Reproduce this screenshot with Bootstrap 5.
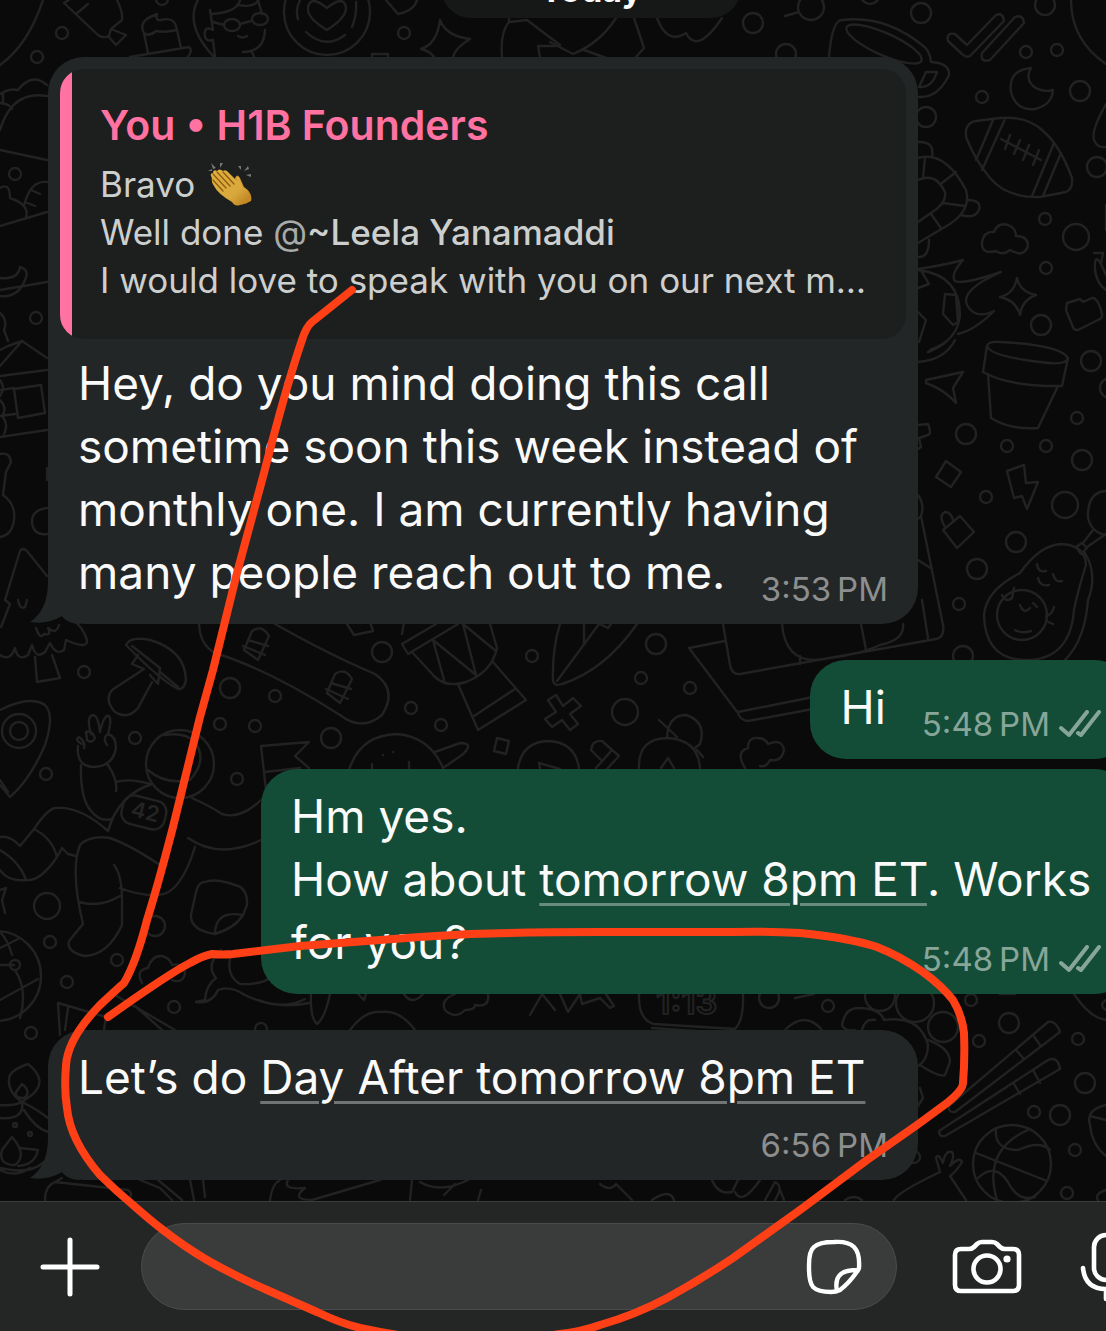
<!DOCTYPE html>
<html lang="en">
<head>
<meta charset="utf-8">
<meta name="viewport" content="width=device-width, initial-scale=1">
<title>Chat</title>
<link href="https://cdn.jsdelivr.net/npm/bootstrap@5.3.0/dist/css/bootstrap.min.css" rel="stylesheet">
<style>
body{background:#0a0a0a;color:#fafafa;font-family:Inter,"Liberation Sans",sans-serif;font-size:46px;line-height:63px}
.app{height:100vh}
.thread{padding:0 0 21px 48px;min-height:0}
.wall{stroke:#222;stroke-width:2.4;fill:none;stroke-linecap:round;stroke-linejoin:round}
.wall text{font-family:Inter,sans-serif;font-weight:600}
.day{background:#151817;border-radius:30px;width:300px;height:66px;font-size:34px;line-height:76px;margin:0 0 39px 393px}
.bubble{width:100%;max-width:870px;border-radius:36px;padding:16px 30px 15px}
.theirs{background:#232627}
.mine{background:#144d37;margin-right:-25px}
.with-quote{padding-top:12px}
.quoted{background:#1d1f1e;border-radius:24px;margin:0 -18px 13px;height:270px;color:#cdcfce;font-size:35px;line-height:48px}
.quoted-bar{width:12px;background:#ff72a1}
.quoted-body{padding:32px 28px 0;min-width:0}
.quoted-name{color:#ff72a1;font-size:41px;line-height:48px;font-weight:600;margin-bottom:11px}
.clap{margin-left:13px}
.at{color:#a9abaa}
.stamp{font-size:33px;line-height:40px;color:#8d8f8f;margin-top:16px}
.tuck{margin-top:-35px}
.mine .stamp{color:#87a699}
.brief{width:auto;min-height:99px}
.brief .stamp{margin:28px 0 0 36px}
.mine + .mine{margin-top:10px}
.turn{margin-top:36px}
.when{color:inherit;text-decoration:underline;text-decoration-thickness:3px;text-underline-offset:7px;text-decoration-color:rgba(255,255,255,.36)}
.when:hover{color:inherit}
.tail{left:-18px;bottom:0}
.ticks{margin-left:9px}
.composer{background:#242626;border-top:1px solid #3c3e3e;height:130px;padding-left:40px}
.field-shell{background:#3a3b3b;border:1px solid #4a4b4b;border-radius:44px;height:87px;margin:0 55px 0 41px;padding:0 34px;max-width:756px}
.field-shell input{min-width:0;color:#fff;box-shadow:none;outline:0}
.tool{background:none;border:0;padding:0;line-height:0;flex:none}
.mic{margin:0 -26px 0 58px}
.ink{fill:none;stroke:#ff4016;stroke-width:8;stroke-linecap:round;stroke-linejoin:round}
</style>
<script src="https://cdn.jsdelivr.net/npm/bootstrap@5.3.0/dist/js/bootstrap.bundle.min.js"></script>
</head>
<body>
<div class="app d-flex flex-column position-relative overflow-hidden">

<svg class="wall position-absolute top-0 start-0 w-100 h-100" aria-hidden="true">
  <!-- top strip -->
  <path d="M43 0Q28 45 0 65M64 3L73-3M64 3L98 35Q104 39 109 36L111 29L122 20Q123 12 117 0M76 14L88 4M111 29L126 35L116 45L108 36"/>
  <path d="M148 53L144 33Q137 21 157 14Q155 21 161 20Q175 16 177 30L181 48M144 33Q149 37 156 31Q164 33 177 30M130 57L189 47Q193 50 188 57"/>
  <path d="M198 0Q184 25 214 57M210 10L213 30M212 14Q238 12 240 0M237 5Q255 8 258 0L262 14M265 30Q264 52 243 52M252 52L254 57M213 30Q203 25 205 37Q207 42 213 40L215 57M238 36Q242 39 247 36M240 24L251 21M213 22L224 25"/>
  <ellipse cx="232" cy="25" rx="8" ry="6"/><ellipse cx="260" cy="19" rx="8" ry="6"/>
  <circle cx="327" cy="12" r="43"/><path d="M327 30Q307 18 308 8Q310-6 327 8Q344-6 346 8Q346 18 327 30ZM298 19Q295 10 300 0M352 27Q357 15 356 2M306 32Q325 50 345 35"/>
  <path d="M440 20Q446 36 470 39Q455 48 453 57M440 20Q437 44 421 49Q430 51 434 57M502 57Q500 32 509 22L527 20L560 45M509 22V18M540 57L538 46H556M372 57V54H388V57M386 0L398 14Q414 11 417 0"/>
  <path d="M616 18Q600 43 573 54L550 42M584 50L612 60M634 18L644 48L636 57M657 18Q667 45 686 33Q697 55 722 18M785 16L799 12"/>
  <path d="M829 57Q832 20 842 20Q885 15 922 45Q930 50 931 62Q950 63 949 75Q938 98 919 97M919 87L926 72H937Q932 88 919 87"/>
  <ellipse cx="884" cy="44" rx="41" ry="11" transform="rotate(24 884 44)"/>
  <path d="M955 34L967 45L996 15Q1003 12 1004 21L970 56Q966 58 962 54L948 41Q946 32 955 34ZM982 53L1015 17Q1023 14 1024 23L990 60Q980 63 982 53Z"/>
  <path d="M1071 0Q1071 40 1106 64M1031 68Q1008 70 1011 92Q1016 111 1035 109Q1052 105 1053 90Q1042 93 1033 86Q1025 78 1031 68Z"/>
  <!-- left edge, upper -->
  <path d="M0 94Q10 88 18 90Q32 72 47 85M0 130Q12 90 47 96M3 103V94M0 103Q10 104 12 109M0 150L47 160M0 226L47 212M0 188Q10 182 10 198Q30 205 26 217M24 206Q30 180 47 182M31 190L40 194M25 202L35 206M0 278Q18 280 20 267Q30 270 25 280Q18 298 0 296M0 290L47 282M0 313Q8 320 4 330L8 341M0 350L8 346L22 341L47 358M0 366L22 341M0 376L47 370M0 390L14 388M0 416L15 414M0 437L47 430M14 389L41 385L45 413L18 418ZM0 380Q6 388 0 396M0 400Q8 408 2 416Q9 424 4 434M0 454Q10 452 11 462L6 472L3 495Q16 504 14 520Q12 535 0 537M47 508Q31 510 32 523Q34 536 47 534M47 468V480"/>
  <path d="M47 576L27 551Q23 547 20 551L5 600L10 604L1 627M18 600Q20 610 25 607L27 600M0 655Q10 662 15 648Q18 662 28 655L32 645Q36 660 45 652L50 643Q56 656 64 650L66 640Q88 650 87 640Q82 625 72 620M35 657L37 682L60 678L52 655M36 628Q40 640 44 634Q52 636 48 628Q56 635 59 625"/>
  <!-- right edge -->
  <path d="M966 130Q968 122 976 121L1000 118Q1027 116 1042 130Q1060 145 1072 178Q1073 189 1066 192L1040 197Q1007 198 990 178Q975 160 966 137ZM993 120L976 160M1005 119L982 170M1054 143L1032 196M1061 153L1043 196M1001 139L1041 160M1010 135L1005 149M1020 140L1014 154M1029 145L1023 160M1039 150L1033 165"/>
  <path d="M918 142Q935 141 932 157M918 158Q945 150 966 190Q972 212 945 227L918 243M918 180Q936 172 945 192Q947 203 931 213L918 222M925 157L923 178M956 172L942 183M943 203L965 206M931 214L941 228M967 200Q982 200 979 210Q975 219 961 215M929 240Q929 258 918 257"/>
  <path d="M994 232Q998 222 1008 225Q1016 228 1016 236Q1028 236 1028 246Q1024 258 1010 250Q1003 256 996 251Q981 255 982 242Q984 231 994 232Z"/>
  <path d="M918 269Q945 265 963 260Q950 275 955 281Q962 285 1001 272Q960 290 967 305Q975 320 994 311Q975 330 958 334M918 270Q960 275 960 315Q958 340 930 350M922 272L929 284L918 288M945 294L956 295L958 322L953 325L943 314ZM918 312L926 320L919 342M918 362Q945 360 955 340M928 352Q940 348 948 340"/>
  <path d="M1017 278Q1020 292 1036 295Q1022 300 1020 315Q1016 300 1000 297Q1014 294 1017 278ZM1066 310L1067 303L1080 299L1083 302L1092 298Q1098 297 1102 314Q1103 318 1098 320L1078 330Q1074 331 1072 325ZM1106 104Q1089 134 1095 142Q1098 148 1106 147M1106 205V230M1094 253H1103L1101 264Q1094 252 1095 270Q1097 284 1106 290M1101 264L1106 275"/>
  <path d="M987 346Q988 341 1000 342Q1060 345 1068 358Q1066 366 1040 362Q990 356 987 346ZM987 346L983 372Q1010 387 1062 386L1068 358M988 374L991 418Q1010 430 1038 428L1058 386M926 380L963 372L953 388L956 403Q945 390 926 383ZM946 461L961 472L951 487L936 477ZM1007 471L1024 465L1026 483L1038 482L1027 509L1022 496L1014 498ZM943 530L960 516L974 532L957 548ZM945 527Q938 515 945 512Q951 512 953 520M918 425L928 424Q932 434 928 435L919 438L921 447L918 449"/>
  <path d="M1061 544Q1085 545 1086 565Q1078 590 1074 610Q1070 660 1026 660Q985 660 984 615Q986 590 1020 573Q1040 545 1061 544ZM1085 553Q1098 575 1088 600Q1085 640 1065 660M1076 547L1082 543L1087 548L1081 554ZM1083 543L1093 530M1087 547L1106 534M1106 491Q1087 492 1088 518Q1092 533 1106 535M1037 564Q1038 573 1046 571M1038 578Q1040 587 1049 585M1053 574Q1055 583 1062 581M1002 595Q1006 603 1012 598L1014 588M1020 605Q1024 615 1030 608M1033 603L1037 607M1015 630Q1022 634 1031 631M1046 616Q1052 615 1054 607M1046 621L1053 624"/>
  <circle cx="1022" cy="615" r="25"/>
  <path d="M918 495Q925 505 921 516L943 625Q945 637 936 639L740 674Q732 675 730 665L723 624M918 560L932 569M918 519L921 516M861 624L866 650M922 600L928 638M782 624Q785 660 815 660Q860 655 880 645Q905 640 903 624M800 656V664M689 648L725 641M689 648L738 713Q740 720 748 721L813 709M738 712L813 697"/>
  <!-- band between bubbles -->
  <path d="M404 622L402 634M402 644L408 654L458 624M402 644L436 624M412 652L435 677Q447 688 466 682Q492 672 497 648L490 624M433 640L444 680M433 640L476 675L463 624L496 651M458 684L478 730L526 700L493 662M474 716L515 689"/>
  <path d="M560 624Q552 650 553 680Q554 687 562 684Q605 670 637 624M557 681L599 624M584 624V643M600 624L608 628L611 624M347 624L354 635L373 631L370 622"/>
  <path d="M556 695L563 706L573 698L581 706L570 714L578 724L570 730L562 720L552 727L545 719L556 712L548 700ZM497 738L509 741L506 754L494 751ZM518 768Q522 742 548 741Q575 742 579 768M540 768L539 763L560 769M591 750Q592 740 602 741L619 756L606 770M612 750L596 768M591 750L601 760M639 768Q638 738 668 738Q698 740 700 768M667 738Q668 715 686 715Q707 722 700 744L695 748M659 720L677 737M697 750L703 757M661 768L668 758L674 768"/>
  <path d="M745 768Q735 752 748 748Q748 737 758 738Q765 738 768 744Q782 738 784 750Q782 762 770 760Q766 768 760 766"/>
  <path d="M199 624Q200 645 215 653Q270 670 340 715Q362 732 382 715Q398 690 375 674Q330 655 275 624M244 650L252 631Q262 624 269 636L258 660ZM243 646L265 655M248 640L268 646M327 693L335 674Q345 667 352 679L340 703ZM326 689L348 699M331 683L351 689"/>
  <path d="M126 645Q130 636 150 640Q185 650 186 680Q184 690 178 689Q160 680 126 645ZM138 655L132 664L144 669L112 690Q104 700 115 712Q128 720 138 708L152 682M132 646L160 668L158 684L150 675M160 672L178 687"/>
  <path d="M0 710Q30 695 45 705Q55 715 45 745Q30 780 10 797L0 785M0 780L8 792"/><circle cx="19" cy="731" r="17"/><circle cx="19" cy="731" r="9"/>
  <!-- astronaut -->
  <circle cx="180" cy="764" r="34"/><path d="M148 770Q165 785 190 780Q208 760 195 742Q185 732 165 735M82 744Q74 740 79 737Q86 742 84 748M78 746Q76 765 92 767Q113 767 116 748Q116 736 108 734Q102 738 107 745M91 734Q86 716 93 715Q98 715 100 732Q104 714 109 716Q112 720 108 734M86 732Q92 730 95 738Q92 744 87 740ZM81 765Q80 800 92 812Q100 822 112 819M108 765Q118 780 116 791M116 782Q130 778 150 784M108 831Q118 795 152 784M34 829Q48 808 56 808Q80 806 108 831L112 820M34 829Q52 838 57 857L62 848L68 854L76 856M0 837Q10 835 20 846L34 829M0 850Q20 862 26 880Q40 882 57 857M0 870Q8 882 26 880M192 798Q210 806 222 814Q240 820 261 800M188 838Q220 860 261 840M82 990M83 924Q70 870 80 845Q90 835 110 838Q130 845 160 865M114 865Q122 875 122 900V925Q108 955 85 956Q66 952 69 941L83 924M79 902Q100 908 120 896M120 888Q140 896 158 895Q180 895 195 847"/>
  <rect x="122" y="798" width="44" height="29" rx="11" transform="rotate(14 144 812)"/><text x="131" y="819" font-size="22" transform="rotate(14 144 812)" stroke="none" fill="#242424">42</text>
  <path d="M261 746L309 742L295 756L309 768M261 746L266 790M265 772L300 768M349 770Q360 735 397 734Q430 737 443 768M372 764V772M409 762V770M435 752L460 743Q475 743 462 755L443 768M383 755V755M393 752V752M205 882Q215 878 235 885Q248 888 247 905L243 915Q235 928 215 934Q190 930 191 915L196 892Q198 882 205 882ZM215 934Q215 910 243 915M0 890L6 888L2 900L5 913"/>
  <circle cx="-4" cy="976" r="45"/><path d="M0 948L20 938M0 965L14 965M0 1000L38 979M15 970Q28 990 20 1018M12 955Q8 940 0 932"/><circle cx="15" cy="965" r="5"/>
  <path d="M142 983Q135 970 148 968Q152 955 162 956Q170 958 172 965Q184 962 185 974Q182 984 172 980M221 950Q205 965 216 978Q206 985 205 1000L196 1002Q212 1004 218 990Q230 985 245 995Q275 1010 309 1003M231 955Q225 975 240 984Q260 985 270 978M258 1000Q285 1010 305 999M311 994Q310 1018 317 1024Q325 1018 330 994M60 1035L58 1003L106 1017L104 1030M65 1030L68 1008M115 995L175 1030M135 1006L162 1030M350 1030Q365 1010 382 1012Q400 1010 415 1030M445 1010Q440 1000 455 994M445 1010Q455 1020 465 1010Q475 1010 475 1005Q490 1008 488 994M358 994L364 1000L366 994M404 994Q412 1006 423 994M530 1015L542 994L555 1010M560 994L568 1012L580 994L582 1004L600 998L610 1008L614 1006L606 994"/>
  <path d="M639 994Q638 1020 654 1024L735 1029Q744 1020 743 994M652 1028L740 1034M785 1030Q805 1010 822 1030M795 998L814 994"/><text x="656" y="1014" font-size="34" stroke-width="2">1:13</text>
  <!-- lower right -->
  <circle cx="880" cy="996" r="15"/><circle cx="915" cy="1003" r="19"/><circle cx="943" cy="1027" r="15"/>
  <path d="M842 1025Q845 1008 858 1008Q880 1008 884 1020Q920 1015 928 1045Q928 1060 918 1066M862 1030Q865 1018 875 1020M842 1025Q845 1032 855 1030M928 1040Q950 1048 950 1062L945 1075Q940 1078 920 1065M920 1088L923 1098L918 1106M1000 994L1015 994M1074 994Q1090 1018 1106 1020M1106 1000Q1098 1005 1106 1010"/>
  <path d="M949 1106L1048 1022Q1056 1020 1060 1032L955 1112Q948 1113 949 1106ZM1033 1035L1040 1045M1016 1050L1024 1059M939 1131L1048 1060Q1058 1056 1060 1069L945 1136Q939 1137 939 1131ZM1033 1070L1040 1083M1014 1084L1020 1094"/>
  <circle cx="1012" cy="1164" r="39"/><path d="M996 1129Q994 1150 1018 1150Q1040 1140 1050 1150M1028 1130Q982 1150 997 1200M976 1153L1047 1181M978 1178Q995 1162 1008 1182Q1018 1202 1035 1197M894 1200Q898 1192 940 1172L936 1158Q938 1152 943 1163Q945 1150 952 1152Q955 1156 950 1166Q960 1156 962 1162Q956 1172 950 1176L966 1200M1106 1105Q1085 1110 1090 1125Q1092 1145 1106 1156M1090 1116L1106 1120M1098 1200Q1094 1194 1106 1190"/>
  <!-- lower left -->
  <path d="M28 1064Q48 1080 33 1094L22 1102Q5 1090 10 1075Q15 1068 28 1064ZM22 1084Q32 1092 24 1098Q14 1098 16 1092ZM0 1105Q15 1106 22 1102Q25 1120 0 1118M24 1110Q35 1128 48 1132M22 1102Q35 1108 48 1118M12 1137Q28 1155 15 1165Q-2 1165 2 1150ZM0 1168Q30 1175 44 1162M20 1148L38 1150Q35 1165 18 1166M0 1170Q15 1178 30 1168M45 1200Q45 1186 55 1182L128 1190Q134 1194 128 1200M55 1182L62 1178M140 1180L160 1188L172 1200M158 1180L182 1200M190 1180L194 1200M203 1180L205 1197M270 1200Q272 1184 280 1180M288 1180Q282 1190 305 1188Q290 1200 312 1200L380 1180M410 1200L412 1180M420 1182Q440 1194 468 1180M444 1195L455 1184M478 1200L481 1190M600 1184Q610 1192 616 1184L632 1200M652 1200Q670 1188 674 1200M712 1180Q718 1195 732 1192L738 1180M735 1192Q742 1206 760 1180M765 1200L775 1182Q784 1186 775 1200M780 1190L784 1200M845 1200Q854 1194 862 1200"/>
  <!-- loose rings -->
  <g>
    <circle cx="62" cy="33" r="6"/><circle cx="37" cy="57" r="6"/><circle cx="162" cy="-1" r="6"/><circle cx="404" cy="33" r="6"/><circle cx="15" cy="174" r="6"/><circle cx="36" cy="318" r="6"/>
    <circle cx="753" cy="23" r="10"/><circle cx="811" cy="7" r="13"/><circle cx="786" cy="54" r="10"/><circle cx="870" cy="-5" r="9"/><circle cx="921" cy="13" r="10"/><circle cx="1045" cy="5" r="10"/><circle cx="1026" cy="52" r="6"/><circle cx="1057" cy="50" r="6"/><circle cx="1080" cy="91" r="10"/><circle cx="982" cy="97" r="6"/><circle cx="926" cy="117" r="10"/><circle cx="1097" cy="167" r="10"/><circle cx="1045" cy="219" r="6"/><circle cx="1076" cy="237" r="13"/><circle cx="1046" cy="268" r="6"/><circle cx="1041" cy="325" r="10"/>
    <circle cx="1091" cy="361" r="10"/><circle cx="1110" cy="388" r="10"/><circle cx="1077" cy="418" r="6"/><circle cx="966" cy="434" r="10"/><circle cx="1007" cy="446" r="6"/><circle cx="1046" cy="446" r="6"/><circle cx="1082" cy="460" r="10"/><circle cx="986" cy="497" r="6"/><circle cx="1065" cy="505" r="13"/><circle cx="1016" cy="542" r="10"/><circle cx="977" cy="569" r="10"/><circle cx="959" cy="604" r="6"/><circle cx="963" cy="656" r="10"/>
    <circle cx="532" cy="656" r="6"/><circle cx="656" cy="644" r="10"/><circle cx="641" cy="678" r="6"/><circle cx="690" cy="688" r="6"/><circle cx="625" cy="712" r="13"/><circle cx="411" cy="708" r="6"/><circle cx="441" cy="725" r="6"/><circle cx="382" cy="652" r="10"/>
    <circle cx="84" cy="672" r="6"/><circle cx="230" cy="688" r="10"/><circle cx="275" cy="696" r="6"/><circle cx="220" cy="724" r="6"/><circle cx="255" cy="726" r="6"/><circle cx="135" cy="738" r="6"/><circle cx="46" cy="774" r="6"/><circle cx="237" cy="779" r="6"/><circle cx="331" cy="738" r="10"/>
    <circle cx="47" cy="906" r="13"/><circle cx="155" cy="926" r="10"/><circle cx="50" cy="942" r="6"/><circle cx="117" cy="960" r="6"/><circle cx="67" cy="982" r="6"/><circle cx="174" cy="1007" r="6"/><circle cx="31" cy="1033" r="6"/><circle cx="261" cy="1029" r="6"/>
    <circle cx="769" cy="998" r="10"/><circle cx="828" cy="1006" r="6"/><circle cx="971" cy="1000" r="6"/><circle cx="1009" cy="1023" r="10"/><circle cx="979" cy="1041" r="6"/><circle cx="1078" cy="1039" r="6"/><circle cx="1085" cy="1083" r="10"/><circle cx="1034" cy="1112" r="6"/><circle cx="1060" cy="1115" r="10"/><circle cx="1075" cy="1150" r="6"/><circle cx="1067" cy="1193" r="6"/><circle cx="914" cy="1157" r="6"/><circle cx="15" cy="1125" r="2"/><circle cx="30" cy="1134" r="2"/>
  </g>
</svg>

<main class="thread flex-grow-1 d-flex flex-column justify-content-end position-relative">
  <div class="day flex-shrink-0 text-center fw-bold">Today</div>

  <article class="bubble theirs with-quote position-relative flex-shrink-0">
    <svg class="tail position-absolute" width="50" height="42" aria-hidden="true"><path d="M18 0Q18 28 0 40Q17 43 32 34Q38 42 50 42V0Z" fill="#232627"/></svg>
    <div class="quoted d-flex overflow-hidden position-relative">
      <div class="quoted-bar flex-shrink-0"></div>
      <div class="quoted-body flex-grow-1">
        <div class="quoted-name text-truncate">You • H1B Founders</div>
        <div class="d-flex align-items-center">Bravo
          <svg class="clap" width="44" height="44" viewBox="0 0 44 44" role="img" aria-label="clapping hands">
            <defs><linearGradient id="skin" x1="0" y1="0" x2="1" y2="1"><stop offset="0" stop-color="#e0b03c"/><stop offset=".65" stop-color="#d8a83c"/><stop offset="1" stop-color="#b87819"/></linearGradient></defs>
            <path d="M27 16Q29 11 32 16L36 25Q45 31 43 39L37 42L24 31Z" fill="#c58a22"/>
            <path d="M4 16Q1 11 5 11Q5 7 9 9Q11 6 15 9Q18 7 21 11L29 19Q27 13 31 15L35 25Q43 29 41 36Q38 43 32 43Q27 45 24 40Q10 32 6 24Q3 20 4 16Z" fill="url(#skin)"/>
            <path d="M5 12L18 26M9 10L22 24M15 10L26 22M5 18L15 29" fill="none" stroke="#8d5b13" stroke-width="1.3" stroke-linecap="round"/>
            <path d="M0 9L4 7L4 9ZM3 1L8 6L5 7ZM12 1L15 1L12 6ZM30 4L33 4L33 8ZM40 4L41 7L36 9ZM38 13L43 12L43 15Z" fill="#777"/>
          </svg>
        </div>
        <div class="text-truncate">Well done <span class="at">@</span><span class="fw-medium">~Leela Yanamaddi</span></div>
        <div class="text-truncate">I would love to speak with you on our next m…</div>
      </div>
    </div>
    <p class="mb-0">Hey, do you mind doing this call sometime soon this week instead of monthly one. I am currently having many people reach out to me.</p>
    <div class="stamp tuck text-end">3:53&#8239;PM</div>
  </article>

  <article class="bubble mine brief turn align-self-end d-flex flex-shrink-0">
    <p class="mb-0">Hi</p>
    <div class="stamp d-flex align-items-center">5:48&#8239;PM<svg class="ticks" width="42" height="28" viewBox="0 0 42 28" fill="none" stroke="#87a699" stroke-width="4" stroke-linecap="round" stroke-linejoin="round" aria-hidden="true"><path d="M2 18L10 25L28 2M19 23L22 25L40 2"/></svg></div>
  </article>

  <article class="bubble mine align-self-end flex-shrink-0">
    <p class="mb-0">Hm yes.<br>How about <a class="when" href="#">tomorrow 8pm ET</a>. Works for you?</p>
    <div class="stamp tuck d-flex align-items-center justify-content-end">5:48&#8239;PM<svg class="ticks" width="42" height="28" viewBox="0 0 42 28" fill="none" stroke="#87a699" stroke-width="4" stroke-linecap="round" stroke-linejoin="round" aria-hidden="true"><path d="M2 18L10 25L28 2M19 23L22 25L40 2"/></svg></div>
  </article>

  <article class="bubble theirs turn position-relative flex-shrink-0">
    <svg class="tail position-absolute" width="50" height="42" aria-hidden="true"><path d="M18 0Q18 28 0 40Q17 43 32 34Q38 42 50 42V0Z" fill="#232627"/></svg>
    <p class="mb-0">Let’s do <a class="when" href="#">Day After tomorrow 8pm ET</a></p>
    <div class="stamp text-end">6:56&#8239;PM</div>
  </article>
</main>

<form class="composer d-flex align-items-center flex-shrink-0 position-relative">
  <button class="tool" type="button" aria-label="Attach"><svg width="60" height="60" fill="none" stroke="#fff" stroke-width="5" stroke-linecap="round"><path d="M30 3V57M3 30H57"/></svg></button>
  <div class="field-shell d-flex align-items-center flex-grow-1">
    <input class="flex-grow-1 border-0 bg-transparent h-100" type="text" aria-label="Message">
    <button class="tool" type="button" aria-label="Stickers"><svg width="56" height="56" fill="none" stroke="#fff" stroke-width="4.4" stroke-linejoin="round"><path d="M28 3Q42 2 48 8Q54 14 53 29Q52 32 50 34Q43 44 34 51Q30 53 25 53Q12 53 7 48Q3 43 3 29V26Q3 12 8 8Q13 3 28 3ZM31 52Q29 42 33 37Q37 31 52 31"/></svg></button>
  </div>
  <button class="tool" type="button" aria-label="Camera"><svg width="70" height="56" fill="none" stroke="#fff" stroke-width="4.6" stroke-linejoin="round"><path d="M9 10H17Q20 10 22 8L25 5Q27 3 30 3H40Q43 3 45 5L48 8Q50 10 53 10H61Q67 10 67 16V46Q67 52 61 52H9Q3 52 3 46V16Q3 10 9 10Z"/><circle cx="35" cy="30" r="13.5"/><circle cx="55" cy="20" r="3.6" fill="#fff" stroke="none"/></svg></button>
  <button class="tool mic" type="button" aria-label="Record voice"><svg width="52" height="70" fill="none" stroke="#fff" stroke-width="4.6" stroke-linecap="round"><rect x="14" y="3" width="24" height="45" rx="12"/><path d="M3 36Q5 57 26 57Q47 57 49 36M26 58V67"/></svg></button>
</form>

<!-- hand-drawn marker -->
<svg class="ink position-absolute top-0 start-0 w-100 h-100 pe-none" aria-hidden="true">
  <path d="M352 290L312 322Q306 327 302 340C290 375 275 430 264 473L237 573L213 670L200 717L173 827Q158 885 147 920Q136 963 124 983Q115 991 100 1005Q68 1038 66 1065Q64 1090 67 1108Q70 1140 100 1175Q115 1190 133 1205Q150 1220 163 1230Q185 1247 207 1260Q235 1276 267 1290L317 1312Q340 1323 360 1328Q460 1350 560 1334Q580 1332 600 1325Q635 1315 667 1298Q700 1280 733 1258L800 1210L867 1160L917 1125L947 1103Q963 1090 963 1083Q965 1060 964 1033Q962 1015 953 1000Q942 986 923 972Q900 956 877 947Q850 938 800 933Q765 931 733 932H600Q530 932 470 934L420 937L300 946L233 954Q222 955 212 954Q202 956 190 963Q170 973 108 1017"/>
</svg>
</div>
</body>
</html>
